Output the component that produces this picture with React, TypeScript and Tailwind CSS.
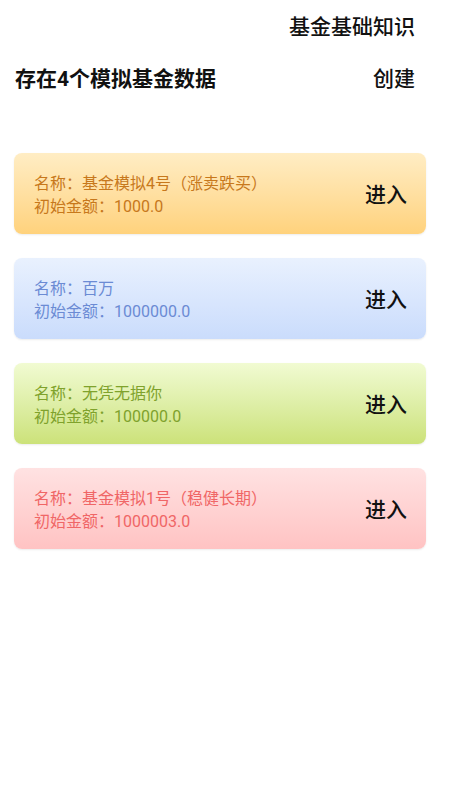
import React from "react";

const font = { fontFamily: 'Roboto, "Noto Sans CJK SC", sans-serif' };

const cards = [
  { name: "基金模拟4号（涨卖跌买）", amount: "1000.0", bg: "bg-gradient-to-b from-[#ffedc4] to-[#ffd27c]", text: "text-[#c7781c]" },
  { name: "百万", amount: "1000000.0", bg: "bg-gradient-to-b from-[#e9f1fe] to-[#cadcfc]", text: "text-[#6b8bd4]" },
  { name: "无凭无据你", amount: "100000.0", bg: "bg-gradient-to-b from-[#f1fbd2] to-[#cce279]", text: "text-[#7fa22c]" },
  { name: "基金模拟1号（稳健长期）", amount: "1000003.0", bg: "bg-gradient-to-b from-[#ffe2e2] to-[#ffc3c3]", text: "text-[#f06666]" },
];

export default function App() {
  return (
    <div className="w-[450px] h-[800px] bg-white" style={font}>
      <div className="flex justify-end pr-[35px] pt-[13px] h-[56px]">
        <span className="text-[21px] leading-[28px] text-[#111] font-medium">基金基础知识</span>
      </div>
      <div className="flex justify-between items-center pl-[15px] pr-[35px] h-[46px]">
        <span className="text-[21px] leading-[28px] text-[#111] font-bold">存在4个模拟基金数据</span>
        <span className="text-[21px] leading-[28px] text-[#111] font-medium">创建</span>
      </div>
      <div className="flex flex-col gap-[24px] pl-[14px] pr-[24px] pt-[51px]">
        {cards.map((c, i) => (
          <div
            key={i}
            className={`${c.bg} h-[81px] rounded-[8px] flex items-center justify-between pl-[20px] pr-[19px] shadow-[0_1px_2px_rgba(0,0,0,0.08)]`}
          >
            <div className={`${c.text} text-[16px] leading-[23px] pt-[3px]`}>
              <div>名称：{c.name}</div>
              <div>初始金额：{c.amount}</div>
            </div>
            <span className="text-[21px] leading-[28px] text-[#111] font-medium pt-[3px]">进入</span>
          </div>
        ))}
      </div>
    </div>
  );
}
